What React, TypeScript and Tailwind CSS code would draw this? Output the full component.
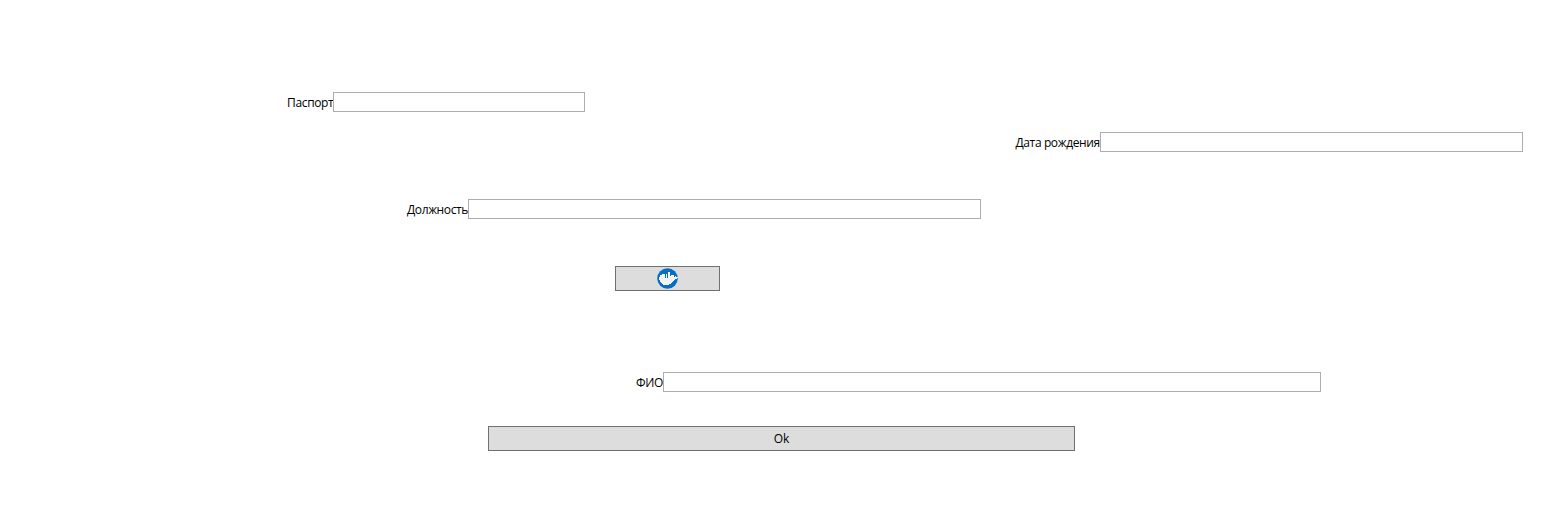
import React from 'react';

function Field({ id, label, className, labelClass, inputClass }: { id: string; label: string; className: string; labelClass: string; inputClass: string }) {
  return (
    <div className={`flex h-5 ${className}`}>
      <label htmlFor={id} className={`shrink-0 whitespace-nowrap pt-[3px] leading-4 ${labelClass}`}>{label}</label>
      <input id={id} className={`h-5 shrink-0 border border-[#abadb3] bg-white px-1 outline-none ${inputClass}`} />
    </div>
  );
}

export default function App() {
  return (
    <main className="flex h-[513px] w-[1565px] flex-col items-start overflow-hidden bg-white pt-[92px] font-['Open_Sans','Noto_Sans',sans-serif] text-[12px] text-black">
      <Field id="passport" label="Паспорт" className="ml-[287px]" labelClass="w-[46px] tracking-[-0.34px]" inputClass="w-[252px]" />
      <Field id="birth" label="Дата рождения" className="mt-5 ml-[1015px]" labelClass="w-[85px] pl-[0.5px] tracking-[-0.38px]" inputClass="w-[423px]" />
      <Field id="position" label="Должность" className="mt-[47px] ml-[407px]" labelClass="w-[61px] tracking-[-0.38px]" inputClass="w-[513px]" />
      <button aria-label="Docker" className="mt-[47px] ml-[615px] flex h-[25px] w-[105px] items-center justify-center border border-[#707070] bg-[#dddddd]">
        <svg className="size-[21px]" viewBox="0 0 21 21">
          <circle cx="10.5" cy="10.5" r="10.3" fill="#086dc4" />
          <path d="M2 9h1V7h2V6h3v4h1V6h1v4h1V4h2v4h1V7h3v2h1V8h1v1h2v1h-1v1h-2v1h-1v1h-1v1h-1v1h-1v1h-2v1H6v-1H5v-1H4v-1H3v-2H2z" fill="#f4f4f4" />
        </svg>
      </button>
      <Field id="name" label="ФИО" className="mt-[81px] ml-[636px]" labelClass="w-[27px] tracking-[-0.3px]" inputClass="w-[658px]" />
      <button className="mt-[34px] ml-[488px] h-[25px] w-[587px] border border-[#707070] bg-[#dddddd] leading-[23px]">Ok</button>
    </main>
  );
}
